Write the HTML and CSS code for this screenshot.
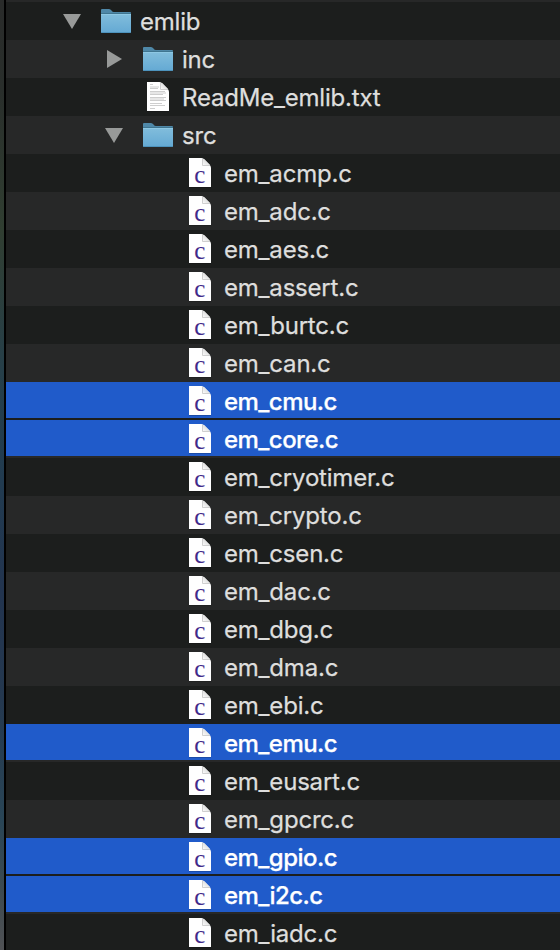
FILE: index.html
```
<!DOCTYPE html>
<html lang="en">
<head>
<meta charset="utf-8">
<title>emlib</title>
<link rel="stylesheet" href="styles.css">
</head>
<body>
<svg class="defs" aria-hidden="true">
  <defs>
    <linearGradient id="blue" x1="0" y1="0" x2="0" y2="1"><stop offset="0" stop-color="#81bddc"/><stop offset="1" stop-color="#64a9d3"/></linearGradient>
    <linearGradient id="fold" x1="0" y1="1" x2="1" y2="0"><stop offset="0" stop-color="#fff"/><stop offset="1" stop-color="#c8c8c8"/></linearGradient>
    <symbol id="folder" viewBox="0 0 32 38">
      <path d="M1 8Q1 7 2 7H9Q10.500 7 11.500 8.500Q12.500 10 14 10H30Q31 10 31 11V14H1Z" fill="#4f88a8"/>
      <path d="M1 12H31V30Q31 31 30 31H2Q1 31 1 30Z" fill="url(#blue)"/>
      <path d="M1 11.500H31" stroke="#3f7590"/>
      <path d="M1 12.500H31" stroke="#8ec8e4"/>
      <path d="M1.500 30.500H30.500" stroke="#4d93bd"/>
    </symbol>
    <symbol id="page" viewBox="0 0 32 38">
      <path d="M5 4H18L27 13V33.500H5Z" fill="#000" opacity=".35"/>
      <path d="M5 4H17.500Q19 4 20.500 5.500L25.500 10.500Q27 12 27 14V33H5Z" fill="#fff"/>
      <path d="M18.500 4.500V11.500H26.300L20.500 5.500Z" fill="url(#fold)"/>
      <path d="M18.500 5V11.500H26" fill="none" stroke="#c4c4c4" stroke-width=".8"/>
    </symbol>
    <symbol id="text" viewBox="0 0 32 38">
      <use href="#page"/>
      <path d="M8 6.500H11M8 9H17M8 10.500H16M8 13.500H23M8 15H24M8 16.500H21M8 19.500H24M8 21H22M8 22.500H24M8 25.500H20M8 27.500H23M8 30.500H13" stroke="#c2c2c2" stroke-width=".8"/>
    </symbol>
    <symbol id="down" viewBox="0 0 20 38"><path d="M1 12H19L10 27Z" fill="#989a99"/></symbol>
    <symbol id="right" viewBox="0 0 20 38"><path d="M3 10V28L18 19Z" fill="#989a99"/></symbol>
  </defs>
</svg>
<div class="window">
  <div class="desktop"></div>
  <ul class="list">
    <li class="row d0"><svg class="arrow"><use href="#down"/></svg><svg class="icon"><use href="#folder"/></svg><span class="name">emlib</span></li>
    <li class="row d1"><svg class="arrow"><use href="#right"/></svg><svg class="icon"><use href="#folder"/></svg><span class="name">inc</span></li>
    <li class="row d1"><span class="arrow"></span><svg class="icon"><use href="#text"/></svg><span class="name">ReadMe_emlib.txt</span></li>
    <li class="row d1"><svg class="arrow"><use href="#down"/></svg><svg class="icon"><use href="#folder"/></svg><span class="name">src</span></li>
    <li class="row d2"><svg class="icon"><use href="#page"/><text x="15.700" y="29">c</text></svg><span class="name">em_acmp.c</span></li>
    <li class="row d2"><svg class="icon"><use href="#page"/><text x="15.700" y="29">c</text></svg><span class="name">em_adc.c</span></li>
    <li class="row d2"><svg class="icon"><use href="#page"/><text x="15.700" y="29">c</text></svg><span class="name">em_aes.c</span></li>
    <li class="row d2"><svg class="icon"><use href="#page"/><text x="15.700" y="29">c</text></svg><span class="name">em_assert.c</span></li>
    <li class="row d2"><svg class="icon"><use href="#page"/><text x="15.700" y="29">c</text></svg><span class="name">em_burtc.c</span></li>
    <li class="row d2"><svg class="icon"><use href="#page"/><text x="15.700" y="29">c</text></svg><span class="name">em_can.c</span></li>
    <li class="row d2 selected"><svg class="icon"><use href="#page"/><text x="15.700" y="29">c</text></svg><span class="name">em_cmu.c</span></li>
    <li class="row d2 selected"><svg class="icon"><use href="#page"/><text x="15.700" y="29">c</text></svg><span class="name">em_core.c</span></li>
    <li class="row d2"><svg class="icon"><use href="#page"/><text x="15.700" y="29">c</text></svg><span class="name">em_cryotimer.c</span></li>
    <li class="row d2"><svg class="icon"><use href="#page"/><text x="15.700" y="29">c</text></svg><span class="name">em_crypto.c</span></li>
    <li class="row d2"><svg class="icon"><use href="#page"/><text x="15.700" y="29">c</text></svg><span class="name">em_csen.c</span></li>
    <li class="row d2"><svg class="icon"><use href="#page"/><text x="15.700" y="29">c</text></svg><span class="name">em_dac.c</span></li>
    <li class="row d2"><svg class="icon"><use href="#page"/><text x="15.700" y="29">c</text></svg><span class="name">em_dbg.c</span></li>
    <li class="row d2"><svg class="icon"><use href="#page"/><text x="15.700" y="29">c</text></svg><span class="name">em_dma.c</span></li>
    <li class="row d2"><svg class="icon"><use href="#page"/><text x="15.700" y="29">c</text></svg><span class="name">em_ebi.c</span></li>
    <li class="row d2 selected"><svg class="icon"><use href="#page"/><text x="15.700" y="29">c</text></svg><span class="name">em_emu.c</span></li>
    <li class="row d2"><svg class="icon"><use href="#page"/><text x="15.700" y="29">c</text></svg><span class="name">em_eusart.c</span></li>
    <li class="row d2"><svg class="icon"><use href="#page"/><text x="15.700" y="29">c</text></svg><span class="name">em_gpcrc.c</span></li>
    <li class="row d2 selected"><svg class="icon"><use href="#page"/><text x="15.700" y="29">c</text></svg><span class="name">em_gpio.c</span></li>
    <li class="row d2 selected"><svg class="icon"><use href="#page"/><text x="15.700" y="29">c</text></svg><span class="name">em_i2c.c</span></li>
    <li class="row d2"><svg class="icon"><use href="#page"/><text x="15.700" y="29">c</text></svg><span class="name">em_iadc.c</span></li>
  </ul>
</div>
</body>
</html>
```
FILE: styles.css
```
body {
  margin: 0;
  background: #272828;
  overflow: hidden;
}
.defs {
  display: block;
  width: 0;
  height: 0;
}
.window {
  display: flex;
  height: 950px;
  overflow: hidden;
}
.desktop {
  box-sizing: border-box;
  flex: none;
  width: 6px;
  border-right: 2px solid #000;
  background: linear-gradient(#292b2a 0, #292e2b 90px, #303e31 230px, #263f49 370px, #213b50 480px, #22344f 590px, #24384f 700px, #294556 820px, #3d4a50 890px, #505255 950px);
}
.list {
  flex: 1;
  margin: 0;
  padding: 2px 0 0;
  list-style: none;
}
.row {
  display: flex;
  box-sizing: border-box;
  height: 38px;
  background-color: #1c1e1d;
  color: #dededd;
}
.row:nth-child(even) {
  background-color: #272828;
}
.row.selected {
  background-image: linear-gradient(#205bca, #205bca);
  background-size: 100% 36px;
  background-repeat: no-repeat;
  color: #fff;
}
.d0 { padding-left: 56px; }
.d1 { padding-left: 98px; }
.d2 { padding-left: 178px; }
.arrow {
  flex: none;
  width: 20px;
  height: 38px;
  margin-right: 18px;
}
.icon {
  flex: none;
  width: 32px;
  height: 38px;
  margin-right: 8px;
}
.icon text {
  fill: #42298a;
  font: 25px "Liberation Serif", serif;
  text-anchor: middle;
}
.name {
  font: 24px/40px Inter, "Liberation Sans", sans-serif;
  letter-spacing: -0.2px;
  white-space: nowrap;
  -webkit-text-stroke: 0.25px currentColor;
}
.selected .name {
  font-weight: 500;
  letter-spacing: -0.55px;
}
```
